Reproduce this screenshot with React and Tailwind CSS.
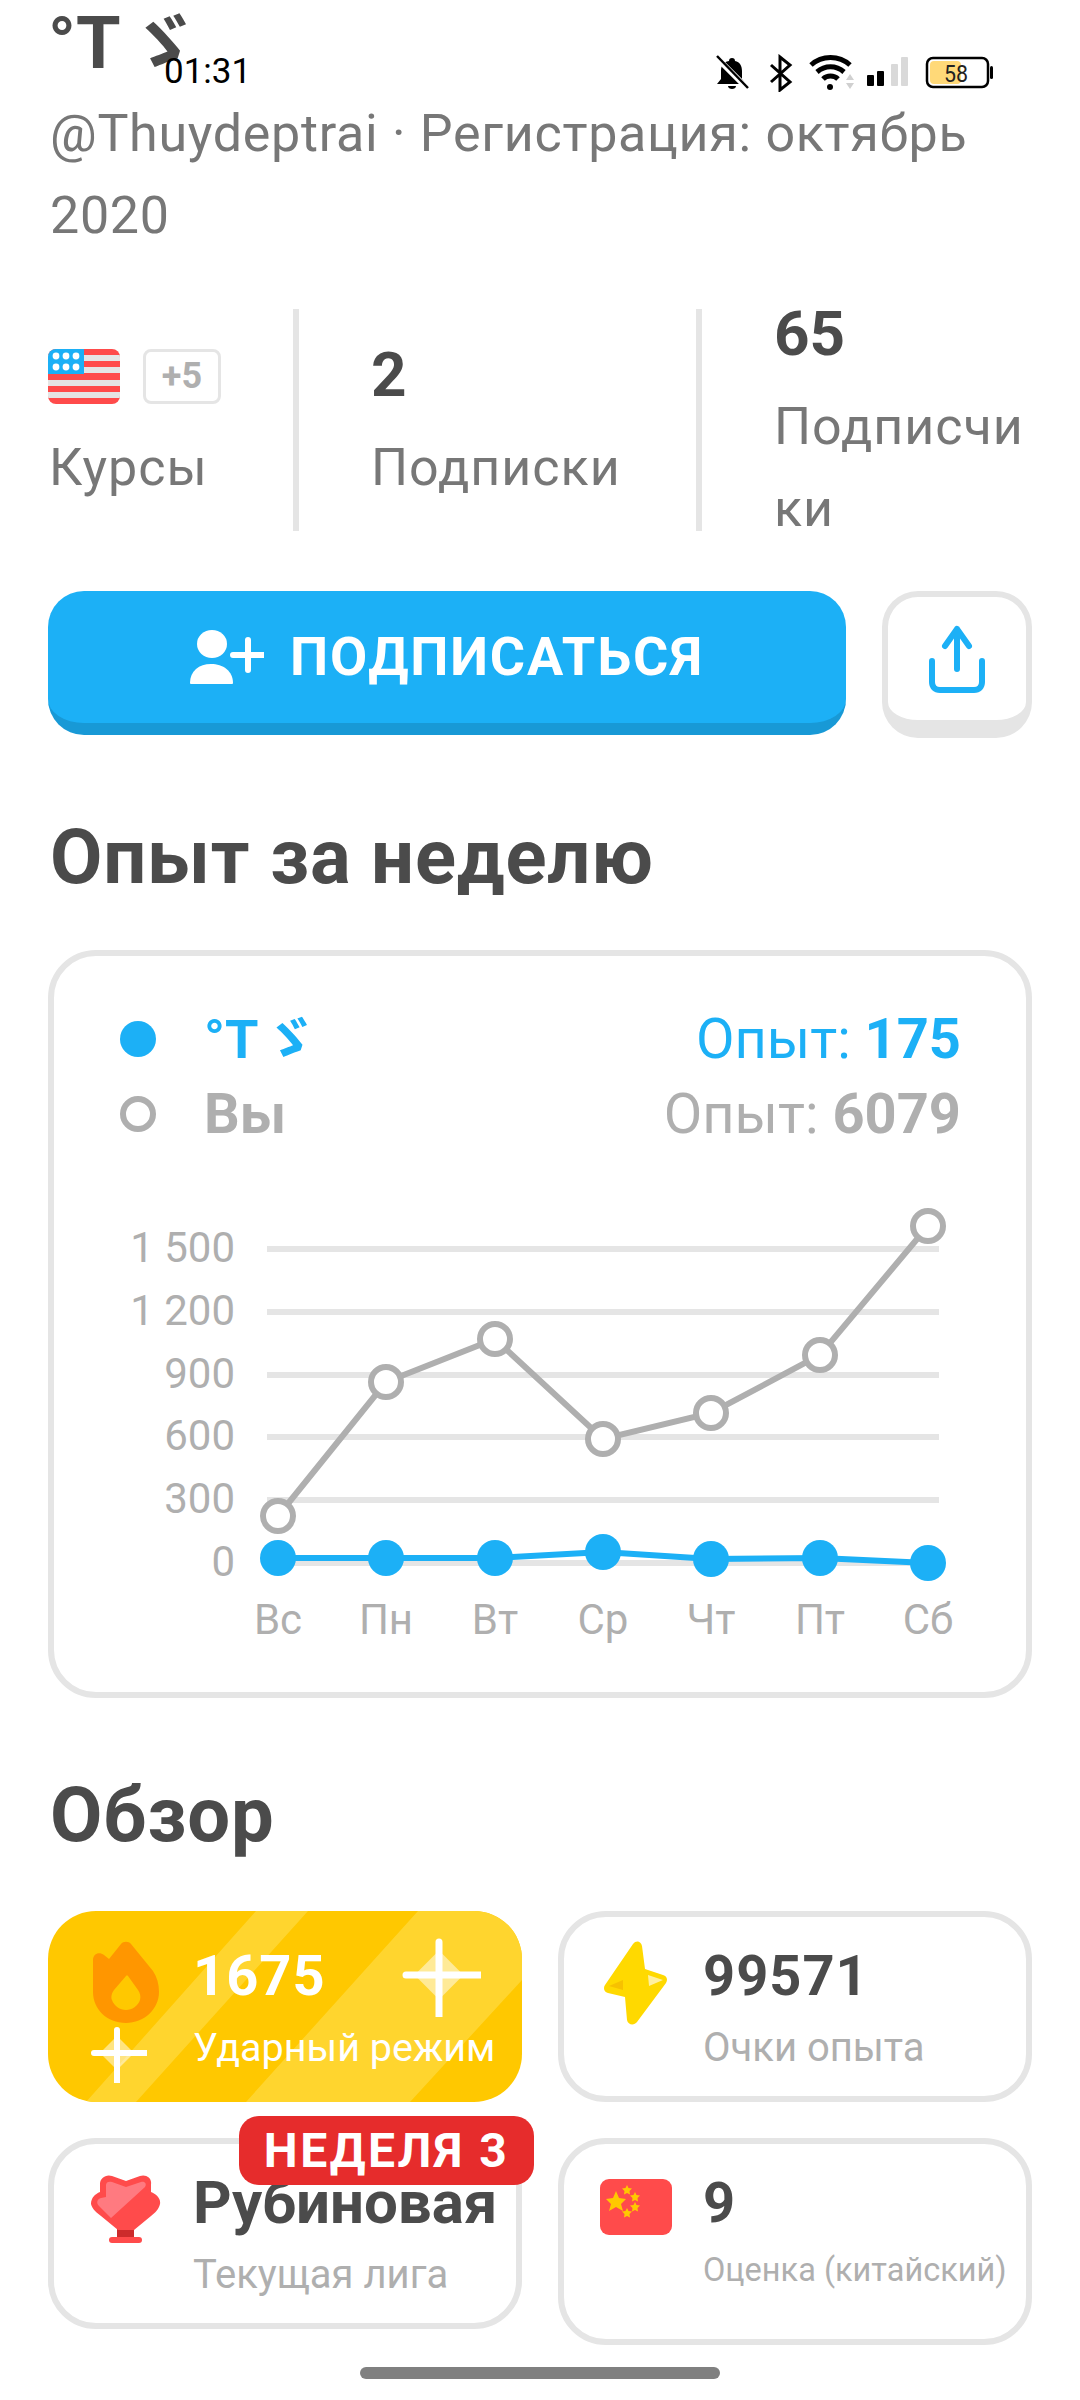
import React from 'react';

const days = ['Вс', 'Пн', 'Вт', 'Ср', 'Чт', 'Пт', 'Сб'];
const xs = [278, 386, 495, 603, 711, 820, 928];
const you = [1516, 1382, 1339, 1439, 1413, 1355, 1226];
const them = [1558, 1558, 1558, 1552, 1559, 1558, 1563];
const yLabels = [['1 500', 1249], ['1 200', 1312], ['900', 1375], ['600', 1437], ['300', 1500], ['0', 1563]];

const pts = (ys) => xs.map((x, i) => `${x},${ys[i]}`).join(' ');

const StatusBar = () => (
  <div className="absolute left-0 top-0 w-full h-[100px]">
    <span className="absolute left-[164px] top-[52px] text-[35px] leading-[40px] text-black">01:31</span>
    <div className="absolute left-[714px] top-[54px]">
      <svg width="282" height="38" viewBox="718 54 282 38">
        {/* bell off */}
        <path d="M736 58c2 0 3 1 3 3 5 1 7 5 7 10v8l4 5h-29l4-5v-8c0-5 2-9 8-10 0-2 1-3 3-3z" fill="#000" />
        <path d="M732 86h8c0 2-2 3-4 3s-4-1-4-3z" fill="#000" />
        <path d="M721 58l31 31" stroke="#fff" strokeWidth="6" />
        <path d="M721 56l31 32" stroke="#000" strokeWidth="2.5" />
        {/* bluetooth */}
        <path d="M775 65l19 17-10 8V57l10 8-19 17" fill="none" stroke="#000" strokeWidth="3" />
        {/* wifi */}
        <path d="M815 65c11-10 28-10 39 0" fill="none" stroke="#000" strokeWidth="5" />
        <path d="M821 72c8-7 19-7 27 0" fill="none" stroke="#000" strokeWidth="5" />
        <path d="M827 79c4-4 11-4 15 0" fill="none" stroke="#000" strokeWidth="5" />
        <circle cx="834" cy="87" r="3" fill="#000" />
        <path d="M850 80l4-6 4 6zM850 83l4 6 4-6z" fill="#d0d0d0" />
        {/* signal */}
        <rect x="871" y="75" width="7" height="11" rx="1" fill="#000" />
        <rect x="881" y="71" width="7" height="15" rx="1" fill="#000" />
        <rect x="895" y="64" width="7" height="22" rx="1" fill="#d9d9d9" />
        <rect x="905" y="57" width="7" height="29" rx="1" fill="#d9d9d9" />
        {/* battery */}
        <rect x="934" y="61" width="31" height="23" rx="4" fill="#ffd978" />
        <rect x="931" y="58" width="61" height="29" rx="6" fill="none" stroke="#000" strokeWidth="2.5" />
        <rect x="994" y="66" width="3" height="13" rx="1.5" fill="#000" />
        <text x="960" y="82" textAnchor="middle" fontSize="24" fontFamily="Roboto" textLength="24" lengthAdjust="spacingAndGlyphs" fill="#222">58</text>
      </svg>
    </div>
  </div>
);

const UsFlag = () => (
  <svg width="72" height="55" viewBox="0 0 72 55">
    <clipPath id="usclip"><rect width="72" height="55" rx="8" /></clipPath>
    <g clipPath="url(#usclip)">
      <rect width="72" height="55" fill="#ff4b4b" />
      <rect y="6" width="72" height="6" fill="#e5e5e5" />
      <rect y="18" width="72" height="6" fill="#e5e5e5" />
      <rect y="31" width="72" height="6" fill="#e5e5e5" />
      <rect y="43" width="72" height="6" fill="#e5e5e5" />
      <rect width="36" height="25" fill="#1cb0f6" />
      {[8, 18, 28].map((x) => (
        <g key={x} fill="#fff">
          <circle cx={x} cy="7" r="3.4" />
          <circle cx={x} cy="18" r="3.4" />
        </g>
      ))}
    </g>
  </svg>
);

const Sparkle = ({ size, arm, width }) => {
  const c = size / 2;
  const d = arm * 0.74;
  return (
    <svg width={size} height={size} viewBox={`0 0 ${size} ${size}`}>
      <path d={`M${c} ${c - d}L${c + d} ${c}L${c} ${c + d}L${c - d} ${c}Z`} fill="#fff" fillOpacity="0.5" />
      <path d={`M${c} ${c - arm}V${c + arm}M${c - arm} ${c}H${c + arm}`} stroke="#fff" strokeWidth={width} strokeLinecap="round" />
    </svg>
  );
};

const Flame = () => (
  <svg width="68" height="84" viewBox="0 0 68 84">
    <path d="M34 83C15 83 1 69 1 52V20C1 14 7 11 12 15L17 19L29 4C31 1 37 1 39 4L61 31C65 37 67 44 67 52C67 69 52 83 34 83Z" fill="#ff9600" />
    <path d="M34 36L22 50C19 54 19 58 20 60C22 66 28 70 34 70C40 70 46 66 48 60C49 56 48 53 46 50L36 36C35 35 35 35 34 36Z" fill="#ffc800" />
  </svg>
);

const Bolt = () => (
  <svg width="64" height="85" viewBox="0 0 64 85">
    <path d="M29 3C32 -1 37 0 38 5L41 28L59 34C63 35 64 39 62 42L33 81C30 85 24 84 23 79L21 56L4 52C0 51 -1 47 1 44Z" fill="#ffd900" />
    <path d="M5 45L19 39V49Z" fill="#f7c100" strokeLinejoin="round" />
    <path d="M44 34L59 39L45 45Z" fill="#fff0a0" />
  </svg>
);

const Trophy = () => (
  <svg width="70" height="69" viewBox="0 0 70 69">
    <rect x="26" y="54" width="17" height="8" fill="#cc2b2b" />
    <rect x="18" y="62" width="33" height="6" rx="3" fill="#ff4b4b" />
    <path d="M9 9C9 3 15 -1 21 1L35 6L49 1C55 -1 61 3 60 9V17C65 19 70 23 69 29C68 34 64 38 60 41L43 55H27L10 41C6 38 1 34 0 29C0 23 4 19 9 17Z" fill="#ff4b4b" />
    <path d="M15 10C15 7 18 6 21 7L35 12L50 7C54 6 56 9 54 12L20 43L8 31C5 28 6 24 10 23L15 22Z" fill="#ff7a80" />
  </svg>
);

const CnFlag = () => (
  <svg width="72" height="56" viewBox="0 0 72 56">
    <rect width="72" height="56" rx="9" fill="#ff4b4b" />
    <g fill="#ffc800">
      <path d="M16 12l3 7 7 1-5 5 2 7-7-4-7 4 2-7-5-5 7-1z" />
      <path d="M27 6l1.500 3 3.500 .5-2.500 2.500 .5 3.500-3-1.500-3 1.500 .5-3.500-2.500-2.500 3.500-.5z" />
      <path d="M35 13l1.500 3 3.500 .5-2.500 2.500 .5 3.500-3-1.500-3 1.500 .5-3.500-2.500-2.500 3.500-.5z" />
      <path d="M35 23l1.500 3 3.500 .5-2.500 2.500 .5 3.500-3-1.500-3 1.500 .5-3.500-2.500-2.500 3.500-.5z" />
      <path d="M27 29l1.500 3 3.500 .5-2.500 2.500 .5 3.500-3-1.500-3 1.500 .5-3.500-2.500-2.500 3.500-.5z" />
    </g>
  </svg>
);

const WeekChart = () => (
  <svg width="972" height="480" viewBox="54 1190 972 480" className="block font-[Roboto,sans-serif]">
    {yLabels.map(([label, y]) => (
      <g key={label}>
        <line x1="267" x2="939" y1={y} y2={y} stroke="#e5e5e5" strokeWidth="6" />
        <text x="235" y={y + 13} textAnchor="end" fontSize="42" fill="#afafaf">{label}</text>
      </g>
    ))}
    {days.map((d, i) => (
      <text key={d} x={xs[i]} y="1634" textAnchor="middle" fontSize="42" fill="#afafaf">{d}</text>
    ))}
    <polyline points={pts(you)} fill="none" stroke="#afafaf" strokeWidth="6" />
    {xs.map((x, i) => (
      <circle key={x} cx={x} cy={you[i]} r="15" fill="#fff" stroke="#afafaf" strokeWidth="6" />
    ))}
    <polyline points={pts(them)} fill="none" stroke="#1cb0f6" strokeWidth="6" />
    {xs.map((x, i) => (
      <circle key={x} cx={x} cy={them[i]} r="18" fill="#1cb0f6" />
    ))}
  </svg>
);

const StatCard = ({ icon, value, label, valueClass = 'text-[56px] tracking-[1px]', labelClass = 'mt-[14px] text-[40px]', className = '' }) => (
  <div className={`flex items-start h-[191px] rounded-[48px] border-[6px] border-[#e5e5e5] pl-[36px] pt-[26px] ${className}`}>
    <div className="w-[72px] flex justify-center">{icon}</div>
    <div className="ml-[31px] min-w-0">
      <div className={`leading-[66px] font-bold text-[#4b4b4b] ${valueClass}`}>{value}</div>
      <div className={`leading-[50px] text-[#afafaf] whitespace-nowrap ${labelClass}`}>{label}</div>
    </div>
  </div>
);

export default function App() {
  return (
    <div className="relative w-[1080px] h-[2400px] overflow-hidden bg-white px-[48px] font-['Roboto','Noto_Sans_CJK_JP',sans-serif]">
      <StatusBar />

      <h1 className="h-[93px] pt-[4px] text-[72px] leading-[80px] font-bold text-[#4b4b4b] [word-spacing:-10px]">°T ゞ</h1>
      <p className="pl-[2px] text-[52px] leading-[82px] tracking-[0.7px] text-[#777777]">@Thuydeptrai · Регистрация: октябрь 2020</p>

      <div className="mt-[52px] flex h-[222px]">
        <div className="w-[245px] shrink-0 flex flex-col justify-center pl-[1px] pt-[17px]">
          <div className="flex items-center gap-[23px] -ml-[1px]">
            <UsFlag />
            <div className="flex items-center justify-center w-[78px] h-[55px] rounded-[8px] border-[3px] border-[#e5e5e5] text-[36px] font-bold text-[#afafaf]">+5</div>
          </div>
          <div className="mt-[23px] text-[52px] leading-[82px] tracking-[1px] text-[#777777]">Курсы</div>
        </div>
        <div className="w-[403px] shrink-0 flex flex-col justify-center border-l-[6px] border-[#e5e5e5] pl-[72px]">
          <div className="text-[62px] leading-[85px] font-bold text-[#4b4b4b]">2</div>
          <div className="mt-[10px] text-[52px] leading-[82px] tracking-[1px] text-[#777777]">Подписки</div>
        </div>
        <div className="flex-1 min-w-0 flex flex-col justify-center border-l-[6px] border-[#e5e5e5] pl-[72px]">
          <div className="text-[62px] leading-[85px] font-bold text-[#4b4b4b]">65</div>
          <div className="mt-[10px] text-[52px] leading-[82px] tracking-[1px] text-[#777777] break-all">Подписчики</div>
        </div>
      </div>

      <div className="mt-[60px] flex items-start justify-between">
        <div className="w-[798px] h-[144px] rounded-[36px] bg-[#1cb0f6] border-b-[12px] border-[#1899d6] flex items-center justify-center gap-[26px]">
          <svg width="74" height="56" viewBox="0 0 74 56" className="shrink-0">
            <ellipse cx="22" cy="15" rx="15" ry="14" fill="#fff" />
            <path d="M0 54C0 42 9 35 21 35C33 35 43 42 43 54C43 55 42 55 41 55H2C1 55 0 55 0 54Z" fill="#fff" />
            <path d="M58 11V41M43 26H73" stroke="#fff" strokeWidth="6" strokeLinecap="round" />
          </svg>
          <span className="text-[54px] leading-none font-bold text-white tracking-[1.8px]">ПОДПИСАТЬСЯ</span>
        </div>
        <div className="w-[150px] h-[147px] rounded-[36px] border-[6px] border-b-[18px] border-[#e5e5e5] flex items-center justify-center">
          <svg width="56" height="68" viewBox="0 0 56 68" fill="none" stroke="#1cb0f6" strokeWidth="6" strokeLinecap="round" strokeLinejoin="round">
            <path d="M3 36V57C3 62 6 65 11 65H45C50 65 53 62 53 57V36" />
            <path d="M28 44V4M16 21L28 4L40 21" />
          </svg>
        </div>
      </div>

      <h2 className="mt-[74px] pl-[2px] text-[76px] leading-[90px] tracking-[0.8px] font-bold text-[#4b4b4b]">Опыт за неделю</h2>

      <div className="mt-[48px] h-[748px] rounded-[48px] border-[6px] border-[#e5e5e5]">
        <div className="pl-[66px] pr-[65px] pt-[50px] h-[234px]">
          <div className="flex items-center h-[66px] text-[#1cb0f6]">
            <span className="w-[36px] h-[36px] rounded-full bg-[#1cb0f6]" />
            <span className="ml-[48px] text-[54px] font-bold [word-spacing:-8px]">°T ゞ</span>
            <span className="ml-auto text-[56px]">Опыт: <b>175</b></span>
          </div>
          <div className="mt-[9px] flex items-center h-[66px] text-[#afafaf]">
            <span className="w-[36px] h-[36px] rounded-full border-[6px] border-[#afafaf]" />
            <span className="ml-[48px] text-[56px] font-bold">Вы</span>
            <span className="ml-auto text-[56px]">Опыт: <b>6079</b></span>
          </div>
        </div>
        <WeekChart />
      </div>

      <h2 className="mt-[72px] pl-[2px] text-[76px] leading-[90px] tracking-[0.8px] font-bold text-[#4b4b4b]">Обзор</h2>

      <div className="mt-[51px] grid grid-cols-2 gap-x-[36px] gap-y-[36px] items-start">
        <div className="relative overflow-hidden h-[191px] rounded-[48px] bg-[#ffc800] text-white">
          <svg className="absolute inset-0" width="474" height="191" viewBox="0 0 474 191">
            <path d="M38 191H88L260 0H208ZM198 191H362L474 69V0H370Z" fill="#ffd52e" />
          </svg>
          <div className="relative flex items-start pl-[42px] pt-[32px]">
            <div className="w-[72px] flex justify-center -mt-[3px]"><Flame /></div>
            <div className="ml-[31px]">
              <div className="text-[56px] leading-[66px] tracking-[1px] font-bold">1675</div>
              <div className="mt-[14px] text-[39.5px] leading-[50px] whitespace-nowrap">Ударный режим</div>
            </div>
          </div>
          <div className="absolute left-[349px] top-[22px]"><Sparkle size="84" arm="33" width="7" /></div>
          <div className="absolute left-[39px] top-[112px]"><Sparkle size="60" arm="23" width="6" /></div>
        </div>

        <StatCard icon={<div className="-mt-[2px]"><Bolt /></div>} value="99571" label="Очки опыта" />

        <div className="relative">
          <StatCard icon={<div className="pt-[5px]"><Trophy /></div>} value="Рубиновая" valueClass="text-[60px]" label="Текущая лига" className="h-[190px]" />
          <div className="absolute left-[191px] -top-[22px] w-[295px] h-[69px] rounded-[20px] bg-[#e62c2c] flex items-center justify-center text-[48px] leading-none font-bold text-white tracking-[2.5px]">НЕДЕЛЯ 3</div>
        </div>

        <StatCard icon={<div className="pt-[9px]"><CnFlag /></div>} value="9" label="Оценка (китайский)" labelClass="mt-[9px] text-[32.5px]" className="h-[207px]" />
      </div>

      <div className="absolute left-[360px] top-[2367px] w-[360px] h-[12px] rounded-full bg-[#808080]" />
    </div>
  );
}
